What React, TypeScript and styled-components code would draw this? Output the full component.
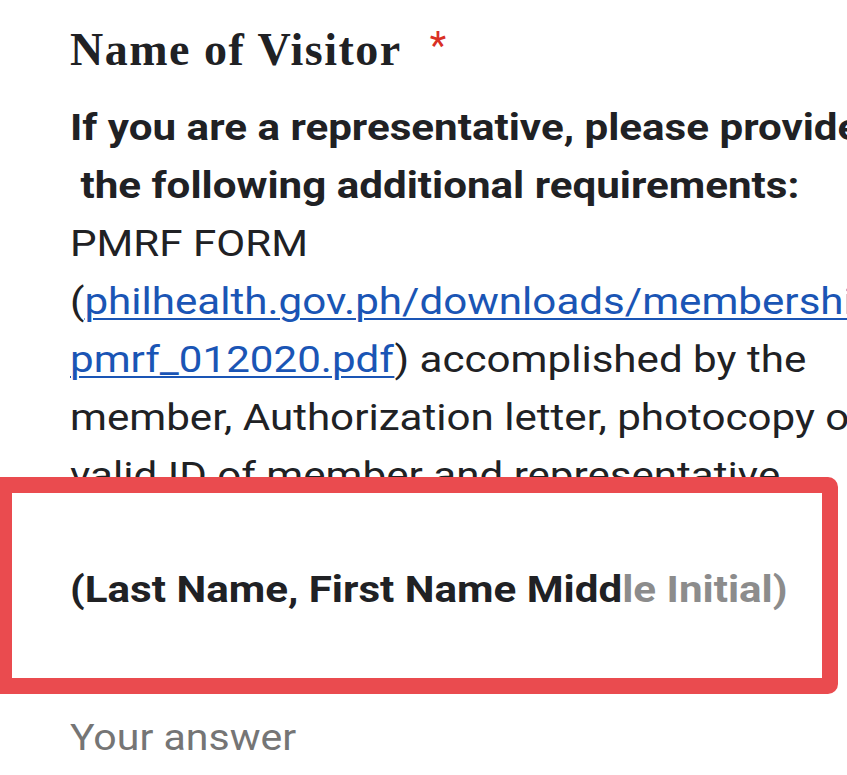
import React from "react";
import styled, { createGlobalStyle } from "styled-components";

const GlobalStyle = createGlobalStyle`
    html, body {
        margin: 0;
        padding: 0;
        background: #ffffff;
        overflow: hidden;
    }
`;

// the capture is stretched sideways, so body text is widened to match
const STRETCH = 1.17;

const Page = styled.div`
    width: 847px;
    height: 775px;
    overflow: hidden;
    padding: 22px 0 0 70px;
    box-sizing: border-box;
    font-family: Roboto, "Liberation Sans", Arial, sans-serif;
    color: #202124;
`;

const Title = styled.div`
    font-family: "Liberation Serif", "Times New Roman", serif;
    font-weight: 700;
    font-size: 46px;
    line-height: 56px;
    height: 56px;
    letter-spacing: 1.5px;
    white-space: nowrap;
`;

const Required = styled.span`
    color: #d93025;
    font-family: Roboto, "Liberation Sans", sans-serif;
    font-weight: 400;
    font-size: 38px;
    line-height: 0;
    margin-left: 28px;
    vertical-align: 6px;
`;

const Description = styled.div`
    margin-top: 21px;
    height: 378px;
    overflow: hidden;
    font-size: 36px;
    line-height: 58px;
    transform: scaleX(${STRETCH});
    transform-origin: left top;
`;

const Line = styled.div<{ bold?: boolean }>`
    white-space: pre;
    font-weight: ${props => (props.bold ? 700 : 400)};
`;

const Link = styled.a`
    color: #1a55b5;
    text-decoration: underline;
    text-decoration-thickness: 2px;
    text-underline-offset: 4px;
`;

const Highlight = styled.div`
    margin-left: -74px;
    width: 842px;
    height: 217px;
    box-sizing: border-box;
    border: 16px solid #ea4b4f;
    border-radius: 4px 10px 10px 4px;
    background: #ffffff;
    padding: 77px 0 0 58px;
`;

const HintText = styled.div`
    font-size: 36px;
    font-weight: 700;
    line-height: 40px;
    white-space: nowrap;
    transform: scaleX(${STRETCH});
    transform-origin: left center;
`;

const Faded = styled.span`
    color: #8c8c8c;
`;

const Answer = styled.div`
    margin-top: 15px;
    font-size: 36px;
    line-height: 58px;
    color: #757575;
    transform: scaleX(1.14);
    transform-origin: left center;
`;

export default function App() {
    return (
        <>
            <GlobalStyle />
            <Page>
                <Title>
                    Name of Visitor<Required>*</Required>
                </Title>
                <Description>
                    <Line bold>If you are a representative, please provide</Line>
                    <Line bold>{" the following additional requirements:"}</Line>
                    <Line>PMRF FORM</Line>
                    <Line>
                        (<Link href="#">philhealth.gov.ph/downloads/membership/</Link>
                    </Line>
                    <Line>
                        <Link href="#">pmrf_012020.pdf</Link>) accomplished by the
                    </Line>
                    <Line>member, Authorization letter, photocopy of</Line>
                    <Line>valid ID of member and representative.</Line>
                </Description>
                <Highlight>
                    <HintText>
                        (Last Name, First Name Midd<Faded>le Initial)</Faded>
                    </HintText>
                </Highlight>
                <Answer>Your answer</Answer>
            </Page>
        </>
    );
}
